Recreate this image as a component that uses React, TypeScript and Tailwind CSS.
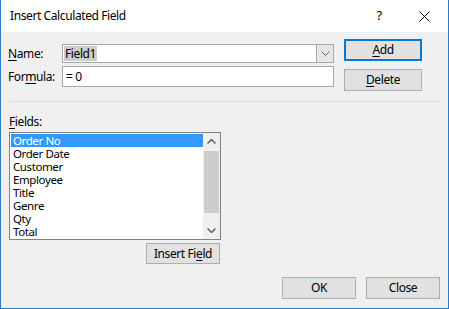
import React from "react";

const font = { fontFamily: '"Noto Sans", "Open Sans", sans-serif', letterSpacing: "-0.4px" };

function Btn({ children, cls = "" }: { children: React.ReactNode; cls?: string }) {
  return (
    <div
      className={`flex items-center justify-center bg-[#e1e1e1] text-[12px] text-black leading-none ${cls}`}
    >
      {children}
    </div>
  );
}

export default function App() {
  const items = ["Order No", "Order Date", "Customer", "Employee", "Title", "Genre", "Qty", "Total"];
  return (
    <div
      className="w-[449px] h-[309px] border-x border-b border-[#2b79c9] bg-[#f0f0f0] flex flex-col text-black overflow-hidden"
      style={font}
    >
      {/* Title bar */}
      <div className="h-[32px] bg-white flex items-center shrink-0">
        <div className="pl-[9px] text-[12px] flex-1">Insert Calculated Field</div>
        <div className="w-[46px] flex justify-center text-[13px]">?</div>
        <div className="w-[46px] flex justify-center pr-[2px]">
          <svg width="11" height="11" viewBox="0 0 11 11">
            <path d="M0.5 0.5 L10.5 10.5 M10.5 0.5 L0.5 10.5" stroke="#000" strokeWidth="1" fill="none" />
          </svg>
        </div>
      </div>

      {/* Body */}
      <div className="flex flex-col pl-[7px] pr-[7px]">
        {/* Top section */}
        <div className="flex">
          <div className="flex flex-col w-[326px]">
            <div className="flex items-center mt-[12px] h-[19px]">
              <div className="w-[54px] text-[12px]">
                <span className="underline underline-offset-2">N</span>ame:
              </div>
              <div className="w-[272px] h-[19px] bg-white border border-[#a6a6a6] flex items-center">
                <div className="flex-1 flex items-center pl-[1px]">
                  <span className="bg-[#cccccc] text-[12px] leading-[15px] px-[1px]">Field1</span>
                </div>
                <div className="w-[17px] h-full bg-[#e6e6e6] border-l border-[#a6a6a6] flex items-center justify-center">
                  <svg width="9" height="5" viewBox="0 0 9 5">
                    <path d="M0.5 0.5 L4.5 4.5 L8.5 0.5" stroke="#606060" strokeWidth="1" fill="none" />
                  </svg>
                </div>
              </div>
            </div>
            <div className="flex items-center mt-[3px] h-[21px]">
              <div className="w-[54px] text-[12px]">
                For<span className="underline underline-offset-2">m</span>ula:
              </div>
              <div className="w-[272px] h-[21px] bg-white border border-[#a6a6a6] flex items-center pl-[3px] text-[12px]">
                =&nbsp;0
              </div>
            </div>
          </div>
          <div className="flex flex-col ml-[10px]">
            <Btn cls="mt-[7px] w-[78px] h-[22px] border-2 border-[#0078d7]">
              <span>
                <span className="underline underline-offset-2">A</span>dd
              </span>
            </Btn>
            <Btn cls="mt-[8px] w-[78px] h-[22px] border border-[#adadad]">
              <span>
                <span className="underline underline-offset-2">D</span>elete
              </span>
            </Btn>
          </div>
        </div>

        {/* Separator */}
        <div className="mt-[10px] ml-[1px] mr-[1px] h-px bg-[#dcdcdc]" />

        {/* Fields label */}
        <div className="mt-[12px] ml-[1px] text-[12px] leading-[15px]">
          <span className="underline underline-offset-2">F</span>ields:
        </div>

        {/* Listbox */}
        <div className="flex flex-col w-[212px] ml-[1px]">
          <div className="mt-[3px] w-[212px] h-[108px] bg-white border border-[#828282] flex">
            <div className="flex-1 flex flex-col pt-px pl-px">
              {items.map((it, i) => (
                <div
                  key={it}
                  className={`h-[13px] flex items-center pl-[2px] text-[11.5px] leading-[13px] ${
                    i === 0 ? "bg-[#3399ff] text-white" : ""
                  }`}
                >
                  {it}
                </div>
              ))}
            </div>
            <div className="w-[17px] bg-[#f0f0f0] flex flex-col items-center">
              <div className="h-[17px] flex items-center justify-center">
                <svg width="9" height="5" viewBox="0 0 9 5">
                  <path d="M0.5 4.5 L4.5 0.5 L8.5 4.5" stroke="#606060" strokeWidth="1.5" fill="none" />
                </svg>
              </div>
              <div className="w-[15px] h-[62px] mt-px bg-[#cdcdcd]" />
              <div className="flex-1" />
              <div className="h-[17px] flex items-center justify-center">
                <svg width="9" height="5" viewBox="0 0 9 5">
                  <path d="M0.5 0.5 L4.5 4.5 L8.5 0.5" stroke="#606060" strokeWidth="1.5" fill="none" />
                </svg>
              </div>
            </div>
          </div>
          <div className="flex justify-end mt-[3px] mr-[1px]">
            <Btn cls="w-[74px] h-[21px] border border-[#adadad]">
              <span>
                Insert Fi<span className="underline underline-offset-2">e</span>ld
              </span>
            </Btn>
          </div>
        </div>

        {/* Bottom buttons */}
        <div className="flex justify-end gap-[10px] mt-[13px] pr-[1px]">
          <Btn cls="w-[74px] h-[22px] border border-[#adadad]">OK</Btn>
          <Btn cls="w-[74px] h-[22px] border border-[#adadad]">Close</Btn>
        </div>
      </div>
    </div>
  );
}
